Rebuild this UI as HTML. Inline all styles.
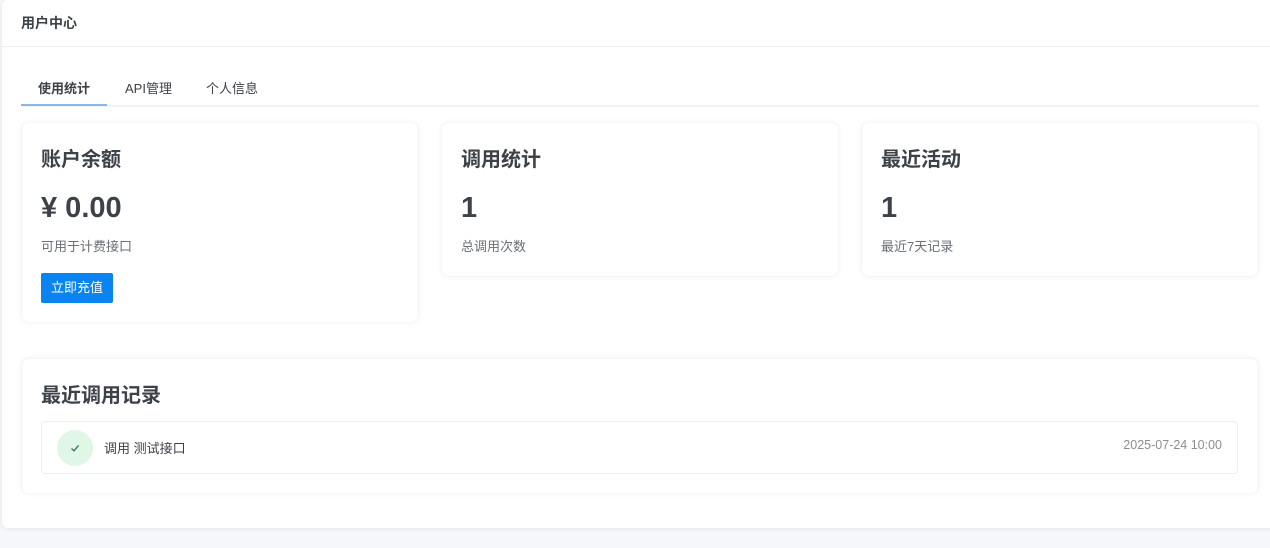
<!DOCTYPE html>
<html><head><meta charset="utf-8"><style>
*{box-sizing:border-box;margin:0;padding:0}
body{width:1270px;height:548px;background:#f5f7fa;font-family:"Liberation Sans","Noto Sans CJK SC",sans-serif;color:#3d4148;overflow:hidden;position:relative}
.main{position:absolute;left:2px;top:0;width:1280px;height:528px;background:#fff;border-radius:6px;box-shadow:0 1px 4px rgba(0,0,0,.08)}
.hdr{height:47px;border-bottom:1px solid #ebeef5;padding:0 0 0 19px;line-height:46px;font-size:14px;font-weight:bold;color:#3d4148}
.tabs{position:absolute;left:19px;top:70px;width:1238px;height:37px;border-bottom:2px solid #f0f2f5}
.tab{position:absolute;top:8px;font-size:13px;color:#3d4148}
.tab.a{font-weight:bold}
.bar{position:absolute;left:0;top:34px;width:86px;height:2px;background:#8ab6e8}
.card{position:absolute;background:#fff;border-radius:8px;box-shadow:0 0 6px rgba(0,0,0,.05);border:1px solid #f5f6f8}
.t{position:absolute;left:19px;top:20px;font-size:20px;font-weight:bold;color:#3d4148}
.v{position:absolute;left:19px;top:69px;font-size:29px;font-weight:bold;color:#3d4148}
.s{position:absolute;left:19px;top:113px;font-size:13px;color:#6a6e75}
.btn{position:absolute;left:19px;top:150px;width:72px;height:30px;background:#0a84f0;color:#fff;font-size:13px;line-height:30px;text-align:center;border-radius:2px}
.row{position:absolute;left:19px;top:62px;width:1197px;height:53px;border:1px solid #ebeef5;border-radius:4px}
.ic{position:absolute;left:15px;top:8px;width:36px;height:36px;border-radius:50%;background:#e1f7e6}
.ic svg{position:absolute;left:13px;top:13px}
</style></head><body>
<div class="main">
<div class="hdr">用户中心</div>
<div class="tabs">
<span class="tab a" style="left:17px">使用统计</span>
<span class="tab" style="left:104px">API管理</span>
<span class="tab" style="left:185px">个人信息</span>
<div class="bar"></div>
</div>
<div class="card" style="left:19px;top:122px;width:398px;height:201px">
<div class="t">账户余额</div><div class="v">¥ 0.00</div><div class="s">可用于计费接口</div><div class="btn">立即充值</div></div>
<div class="card" style="left:439px;top:122px;width:398px;height:155px">
<div class="t">调用统计</div><div class="v">1</div><div class="s">总调用次数</div></div>
<div class="card" style="left:859px;top:122px;width:398px;height:155px">
<div class="t">最近活动</div><div class="v">1</div><div class="s">最近7天记录</div></div>
<div class="card" style="left:19px;top:358px;width:1238px;height:136px">
<div class="t" style="top:20px">最近调用记录</div>
<div class="row"><div class="ic"><svg width="10" height="10" viewBox="0 0 10 10"><path d="M1.5 5.5 L4 7.8 L8.5 2.5" fill="none" stroke="#3a7a55" stroke-width="1.4"/></svg></div>
<span style="position:absolute;left:62px;top:16px;font-size:13px;color:#3d4148">调用 测试接口</span>
<span style="position:absolute;right:15px;top:16px;font-size:12.5px;color:#8a8e95">2025-07-24 10:00</span></div>
</div>
</div>
</body></html>
